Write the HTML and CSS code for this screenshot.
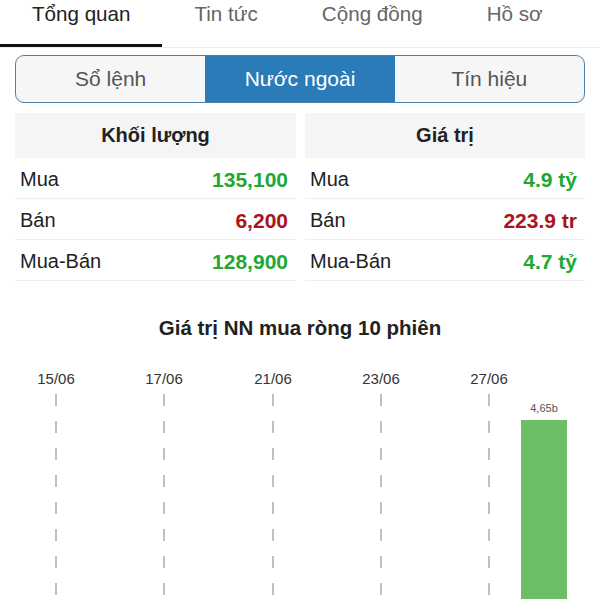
FILE: index.html
```html
<!DOCTYPE html>
<html lang="vi">
<head>
  <meta charset="UTF-8" />
  <title>Nước ngoài</title>
  <link rel="stylesheet" href="styles.css">
</head>
<body>
  <!-- Thanh tab trên cùng -->
  <div class="tabs">
    <div class="tab active">Tổng quan</div>
    <div class="tab">Tin tức</div>
    <div class="tab">Cộng đồng</div>
    <div class="tab">Hồ sơ</div>
  </div>

  <div class="segments">
    <div class="segment">Sổ lệnh</div>
    <div class="segment active">Nước ngoài</div>
    <div class="segment">Tín hiệu</div>
  </div>

  <div class="tables">
    <div class="table">
      <div class="table-head">Khối lượng</div>
      <div class="row"><span>Mua</span><span class="up">135,100</span></div>
      <div class="row"><span>Bán</span><span class="down">6,200</span></div>
      <div class="row"><span>Mua-Bán</span><span class="up">128,900</span></div>
    </div>
    <div class="table">
      <div class="table-head">Giá trị</div>
      <div class="row"><span>Mua</span><span class="up">4.9 tỷ</span></div>
      <div class="row"><span>Bán</span><span class="down">223.9 tr</span></div>
      <div class="row"><span>Mua-Bán</span><span class="up">4.7 tỷ</span></div>
    </div>
  </div>

  <div class="chart">
    <h2 class="chart-title">Giá trị NN mua ròng 10 phiên</h2>
    <svg class="chart-svg" width="600" height="250" viewBox="0 0 600 250">
      <g class="dates">
        <text x="56" y="35">15/06</text>
        <text x="164" y="35">17/06</text>
        <text x="273" y="35">21/06</text>
        <text x="381" y="35">23/06</text>
        <text x="489" y="35">27/06</text>
      </g>
      <g class="grid">
        <line x1="56" y1="45" x2="56" y2="250" />
        <line x1="164" y1="45" x2="164" y2="250" />
        <line x1="273" y1="45" x2="273" y2="250" />
        <line x1="381" y1="45" x2="381" y2="250" />
        <line x1="489" y1="45" x2="489" y2="250" />
      </g>
      <rect class="bar" x="521" y="71" width="46" height="179" />
      <text class="bar-label" x="544" y="63">4,65b</text>
    </svg>
  </div>
</body>
</html>
```

FILE: styles.css
```css
* {
  box-sizing: border-box;
}

body {
  margin: 0;
  font-family: "Liberation Sans", Arial, sans-serif;
  background-color: #ffffff;
  color: #222;
  width: 600px;
  overflow: hidden;
}

.tabs {
  display: flex;
  border-bottom: 1px solid #eeeeee;
}

.tab {
  padding: 2px 32px 18px;
  font-size: 20.6px;
  line-height: 24px;
  color: #666;
  border-bottom: 3px solid transparent;
  white-space: nowrap;
}

.tab.active {
  color: #222;
  border-bottom-color: #111;
}

.segments {
  margin: 7px 15px 0;
  display: grid;
  grid-template-columns: 1fr 1fr 1fr;
  border: 1.5px solid #4f80aa;
  border-radius: 9px;
  overflow: hidden;
  background: #f6f6f7;
}

.segment {
  height: 46px;
  line-height: 46px;
  text-align: center;
  font-size: 21px;
  color: #555;
}

.segment.active {
  background-color: #2b7bb9;
  color: #fff;
}

.tables {
  display: grid;
  grid-template-columns: 281px 280px;
  gap: 9px;
  padding: 0 15px;
  margin-top: 10px;
}

.table-head {
  height: 45px;
  line-height: 45px;
  background: #f5f5f5;
  text-align: center;
  font-size: 20px;
  font-weight: bold;
  color: #222;
}

.row {
  display: flex;
  justify-content: space-between;
  align-items: center;
  height: 41px;
  border-bottom: 1px solid #eeeeee;
  padding: 3px 8px 0 5px;
  font-size: 20px;
}

.row .up,
.row .down {
  font-weight: bold;
  font-size: 21px;
}

.up {
  color: #22a832;
}

.down {
  color: #a8141e;
}

.chart {
  margin-top: 35px;
}

.chart-title {
  margin: 0;
  text-align: center;
  font-size: 20.5px;
  line-height: 24px;
  color: #222;
}

.chart-svg {
  display: block;
  margin-top: 9px;
}

.dates text {
  font-size: 15px;
  fill: #333;
  text-anchor: middle;
}

.grid line {
  stroke: #aaaaaa;
  stroke-width: 1.5;
  stroke-dasharray: 12 15;
}

.bar {
  fill: #6dbd67;
}

.bar-label {
  font-size: 11px;
  fill: #555;
  text-anchor: middle;
}
```
